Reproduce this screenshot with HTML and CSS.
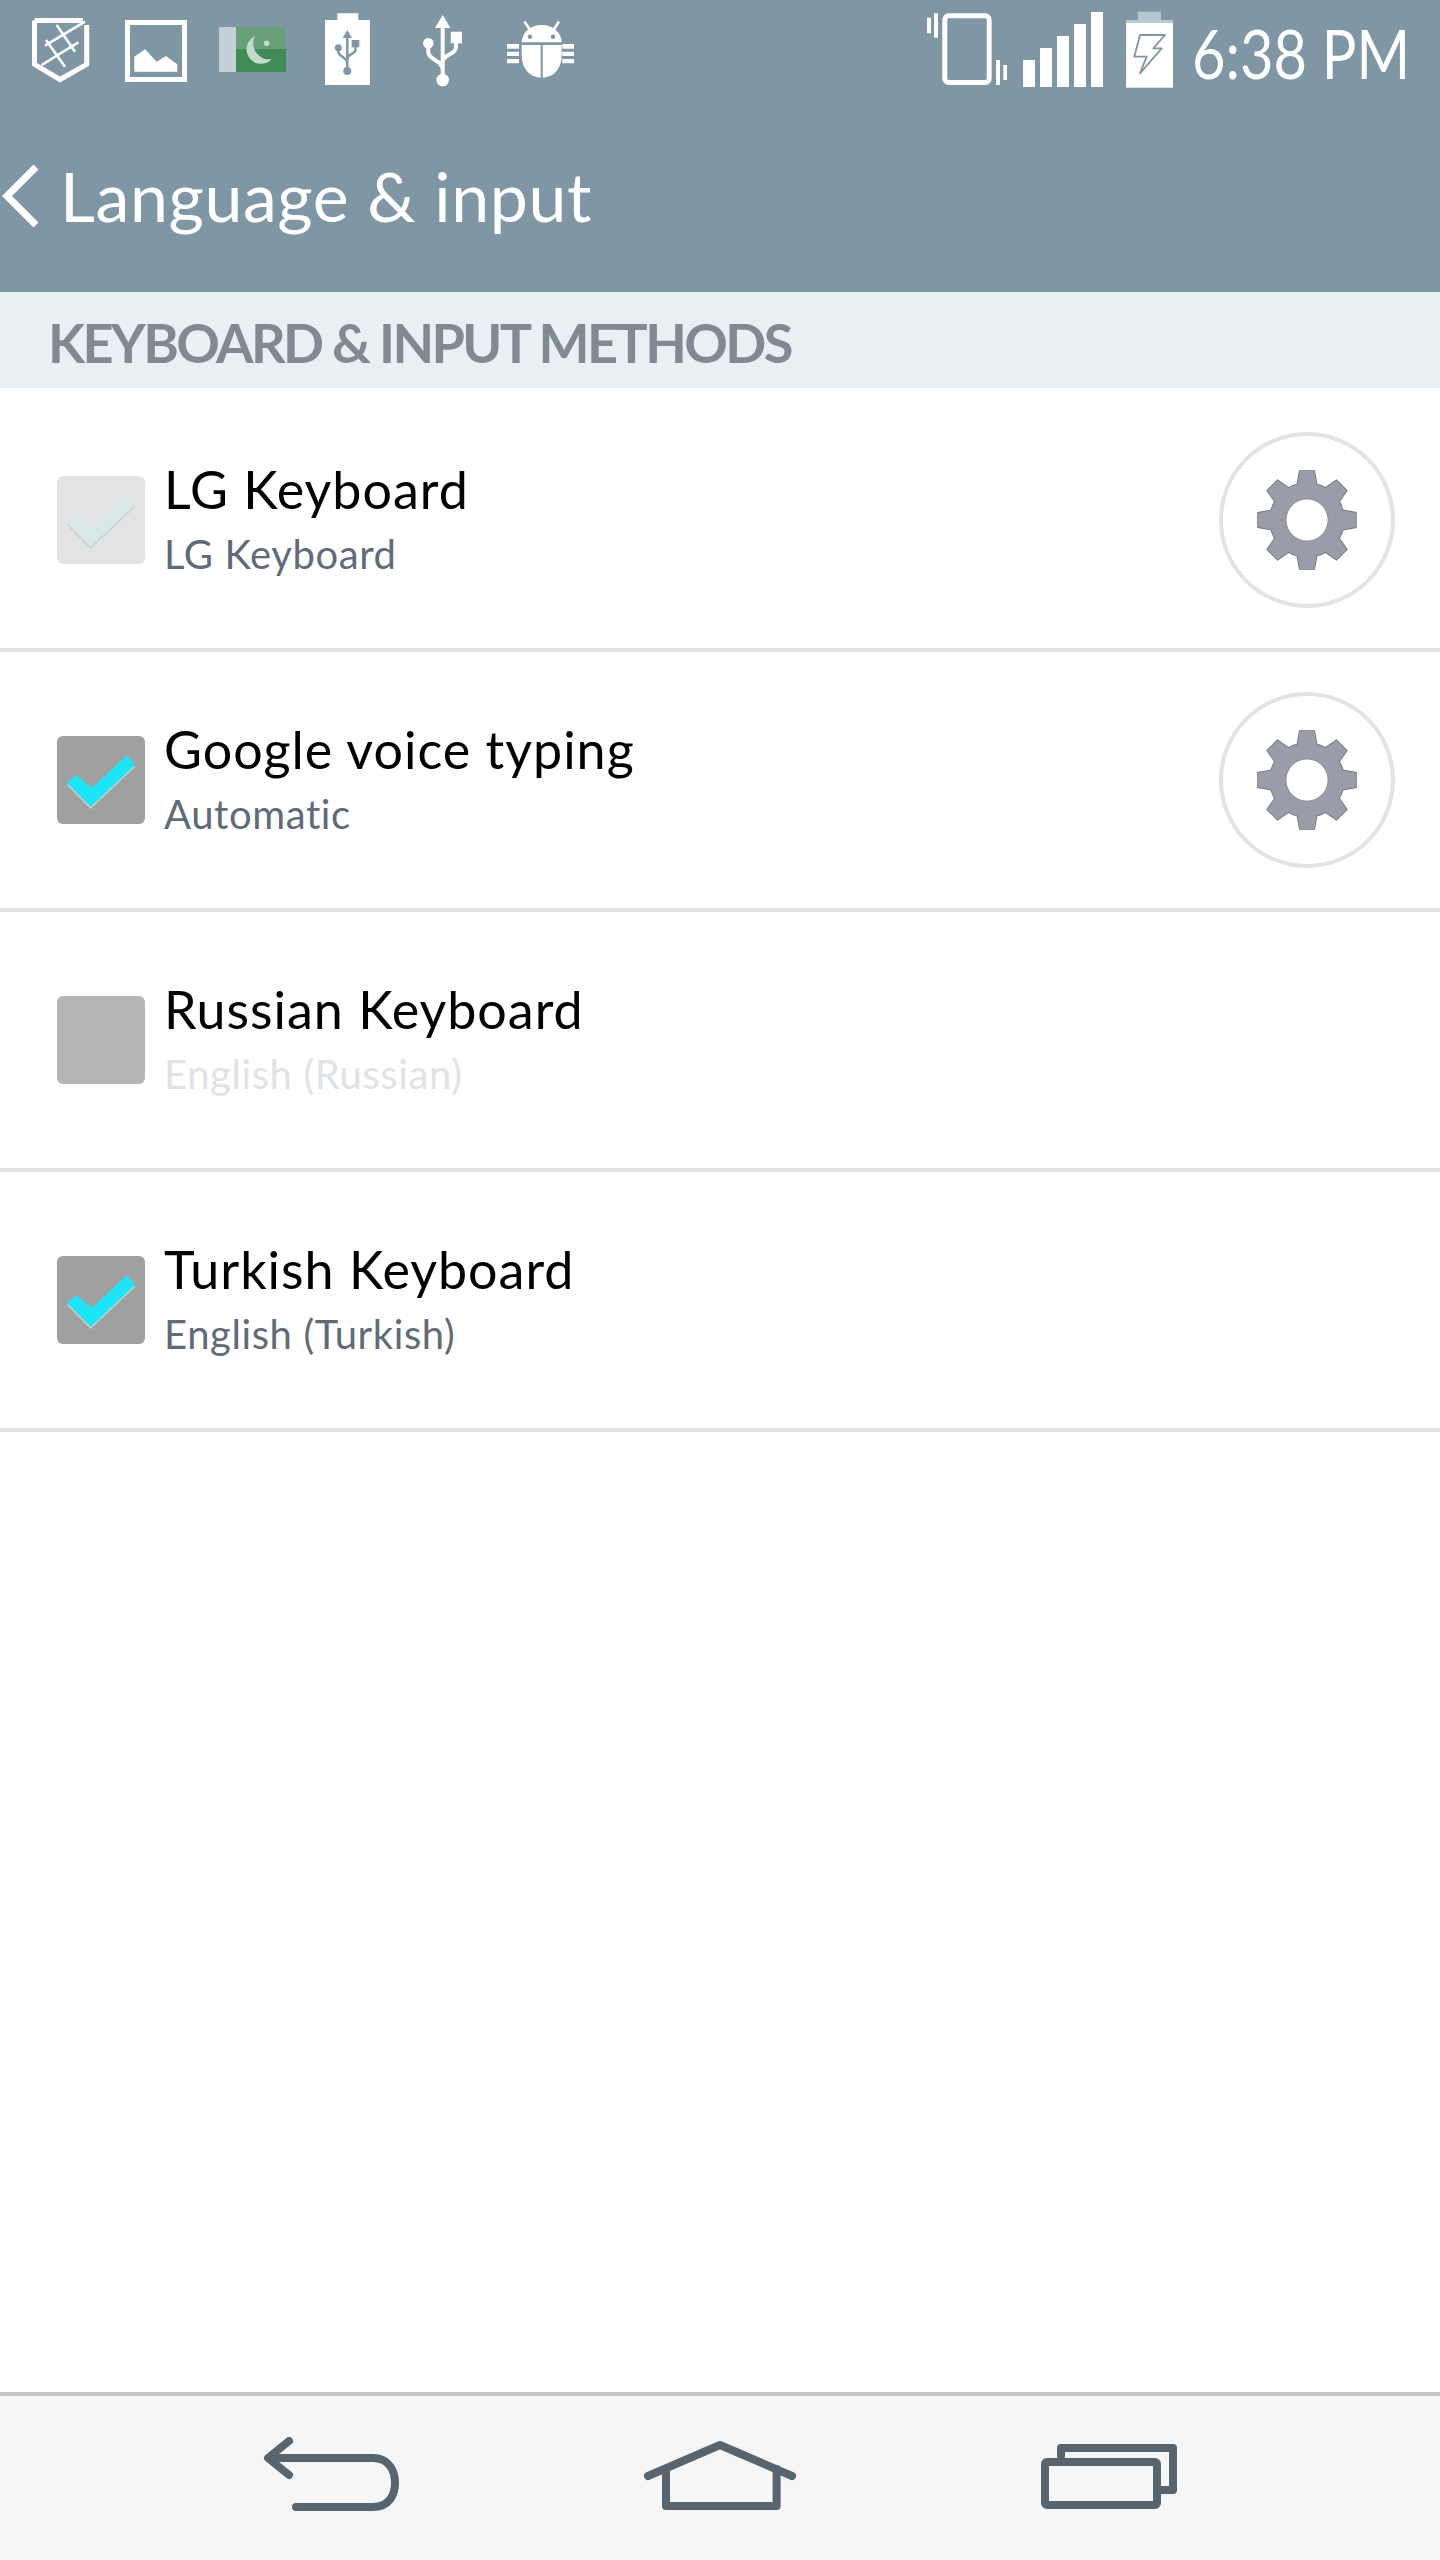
FILE: index.html
```html
<!DOCTYPE html>
<html lang="en">
<head>
<meta charset="utf-8">
<title>Language &amp; input</title>
<link rel="stylesheet" href="styles.css">
</head>
<body>
<svg class="defs" width="0" height="0" aria-hidden="true">
  <defs>
    <g id="teeth">
      <circle cx="60" cy="60" r="37"/>
      <polygon id="tooth" points="52.7,11 67.3,11 70,26 50,26"/>
      <use href="#tooth" transform="rotate(45 60 60)"/>
      <use href="#tooth" transform="rotate(90 60 60)"/>
      <use href="#tooth" transform="rotate(135 60 60)"/>
      <use href="#tooth" transform="rotate(180 60 60)"/>
      <use href="#tooth" transform="rotate(225 60 60)"/>
      <use href="#tooth" transform="rotate(270 60 60)"/>
      <use href="#tooth" transform="rotate(315 60 60)"/>
    </g>
    <g id="gear">
      <use href="#teeth" class="gear-edge"/>
      <use href="#teeth" class="gear-fill"/>
      <circle cx="60" cy="60" r="21" class="gear-hole"/>
    </g>
    <g id="tick">
      <polygon class="tick-shadow" points="10,49 19,41 34.5,54 70,21 78,31 33.6,73"/>
      <polygon points="10,47 19,39 34.5,52 70,19 78,29 33.6,71"/>
    </g>
  </defs>
</svg>

<div class="page">
  <header class="appbar">
    <div class="status">
      <div class="status-left">
        <svg width="61" height="100" viewBox="0 0 61 100" class="ic">
          <path d="M2.5 20.500H51M54.700 25V64.300L28 79.500 2.500 64.300V20.500" class="line-5"/>
          <path d="M9.700 65 46.300 42.300M13 45.700 53 21.700M24.700 25 43 51.700M14 40 33 66.700" class="line-2"/>
        </svg>
        <svg width="62" height="100" viewBox="0 0 62 100" class="ic">
          <rect x="2.5" y="22.5" width="57" height="57" class="line-5"/>
          <polygon points="9.3,71.7 9.3,56.7 20,49.3 31.7,61.7 41,56 52.3,64.3 52.3,71.7" class="solid"/>
        </svg>
        <svg width="74" height="100" viewBox="0 0 74 100" class="ic">
          <rect x="0" y="27" width="17" height="45" class="flag-band"/>
          <rect x="17" y="27" width="50" height="22" class="flag-top"/>
          <rect x="17" y="49" width="50" height="23" class="flag-bottom"/>
          <path d="M36 36A14.600 14.600 0 1 0 53 59 16 16 0 0 1 36 36Z" class="flag-moon"/>
          <circle cx="47.7" cy="43.3" r="2.8" class="flag-moon"/>
        </svg>
        <svg width="66" height="100" viewBox="0 0 66 100" class="ic">
          <path d="M12.300 13.300H33.300V20H45V85H0V20H12.300Z" class="solid"/>
          <path d="M22.300 36V71M13.300 48V52C13.300 56 22.300 58 22.300 63M30.500 47V50C30.500 54 22.300 54 22.300 59" class="usb-thin"/>
          <polygon points="22.3,30 27,38 17.6,38" class="usb-dark"/>
          <circle cx="22.3" cy="71" r="4" class="usb-dark"/>
          <circle cx="13.3" cy="47.7" r="3.5" class="usb-dark"/>
          <rect x="26.7" y="40" width="7.6" height="7.3" class="usb-dark"/>
        </svg>
        <svg width="52" height="100" viewBox="0 0 52 100" class="ic">
          <path d="M19.700 25V78M5.300 45V52C5.300 60 19.700 60 19.700 70M33 42V47C33 55 19.700 54 19.700 62" class="line-4"/>
          <polygon points="19.7,15 27.5,28 12,28" class="solid"/>
          <circle cx="19.7" cy="80" r="6.3" class="solid"/>
          <circle cx="5.3" cy="43.3" r="5.3" class="solid"/>
          <rect x="27.7" y="31.7" width="11.3" height="11.6" class="solid"/>
        </svg>
        <svg width="67" height="100" viewBox="0 0 67 100" class="ic">
          <path d="M14.700 42.300A20 17.300 0 0 1 54.700 42.300Z" class="solid"/>
          <path d="M23 30 17.500 21.500M46.500 30 52 21.500" class="line-2"/>
          <circle cx="23" cy="36.7" r="2.2" class="bg-dot"/>
          <circle cx="46" cy="36.7" r="2.2" class="bg-dot"/>
          <path d="M14.700 45H33.700V77.700C22 77 14.700 68 14.700 55Z" class="solid"/>
          <path d="M54.700 45H35.700V77.700C47.400 77 54.700 68 54.700 55Z" class="solid"/>
          <path d="M0 44H12V48.700H0ZM0 51.700H12V56H0ZM0 59H12V63.300H0ZM55.300 44H67V48.700H55.300ZM55.300 51.700H67V56H55.300ZM55.300 59H67V63.300H55.300Z" class="solid"/>
        </svg>
      </div>
      <div class="status-right">
        <svg width="80" height="100" viewBox="0 0 80 100" class="ic">
          <rect x="17.8" y="15.8" width="44.4" height="66.7" rx="4" class="line-5"/>
          <path d="M0 17.700H4V33.300H0ZM7 13.300H11V37.700H7ZM69 60H73V85H69ZM76.300 65H80.300V80H76.300Z" class="solid"/>
        </svg>
        <svg width="80" height="100" viewBox="0 0 80 100" class="ic">
          <path d="M0 60H12V87H0ZM17 48H29V87H17ZM34 36H46V87H34ZM51 24H63V87H51ZM68 12H80V87H68Z" class="solid"/>
        </svg>
        <svg width="47" height="100" viewBox="0 0 47 100" class="ic">
          <rect x="11.7" y="11.7" width="23.3" height="8.3" class="batt-nub"/>
          <rect x="0" y="20" width="47" height="3" class="batt-band"/>
          <rect x="0" y="23" width="47" height="64.7" class="solid"/>
          <polygon points="14,35 39,35 27.3,48.3 35.7,48.3 14,73.3 20.7,56.7 8.3,56.7" class="bolt"/>
        </svg>
        <span class="clock">6:38 PM</span>
      </div>
    </div>
    <div class="titlebar">
      <svg width="60" height="80" viewBox="0 0 60 80" class="chevron">
        <polyline points="36,11 7,40 36,69"/>
      </svg>
      <h1 class="title">Language &amp; input</h1>
    </div>
  </header>

  <h2 class="section">KEYBOARD &amp; INPUT METHODS</h2>

  <main class="list">
    <div class="row">
      <svg width="88" height="88" viewBox="0 0 88 88" class="box box-faded"><use href="#tick"/></svg>
      <div class="labels">
        <div class="name">LG Keyboard</div>
        <div class="desc">LG Keyboard</div>
      </div>
      <button class="gear-btn" aria-label="Settings"><svg width="120" height="120" viewBox="0 0 120 120"><use href="#gear"/></svg></button>
    </div>
    <div class="row">
      <svg width="88" height="88" viewBox="0 0 88 88" class="box box-on"><use href="#tick"/></svg>
      <div class="labels">
        <div class="name">Google voice typing</div>
        <div class="desc">Automatic</div>
      </div>
      <button class="gear-btn" aria-label="Settings"><svg width="120" height="120" viewBox="0 0 120 120"><use href="#gear"/></svg></button>
    </div>
    <div class="row">
      <div class="box box-off"></div>
      <div class="labels">
        <div class="name">Russian Keyboard</div>
        <div class="desc desc-off">English (Russian)</div>
      </div>
    </div>
    <div class="row">
      <svg width="88" height="88" viewBox="0 0 88 88" class="box box-on"><use href="#tick"/></svg>
      <div class="labels">
        <div class="name">Turkish Keyboard</div>
        <div class="desc">English (Turkish)</div>
      </div>
    </div>
  </main>

  <nav class="nav">
    <svg width="136" height="76" viewBox="0 0 136 76" class="nav-ic">
      <path d="M26 4 5 21 26 38"/>
      <path d="M8 21H110C126 21 132 34 132 46 132 58 126 70 110 70H33"/>
    </svg>
    <svg width="152" height="76" viewBox="0 0 152 76" class="nav-ic">
      <path d="M4 39 76 8 148 39"/>
      <path d="M22 32V69H132.600V32"/>
    </svg>
    <svg width="136" height="76" viewBox="0 0 136 76" class="nav-ic">
      <rect x="4" y="25" width="112" height="43" rx="2"/>
      <path d="M20 19V11H132V53H120"/>
    </svg>
  </nav>
</div>
</body>
</html>
```

FILE: styles.css
```css
* { box-sizing: border-box; }
html, body { margin: 0; padding: 0; background: #fff; }
body { font-family: "Lato", "Noto Sans", sans-serif; }
.defs { display: block; height: 0; }

.page { width: 1440px; height: 2560px; display: flex; flex-direction: column; background: #fff; }

.appbar { height: 292px; background: #7f96a5; color: #fff; flex: none; display: flex; flex-direction: column; }
.status { height: 100px; flex: none; display: flex; justify-content: space-between; }
.status-left { display: flex; gap: 32px; padding-left: 32px; }
.status-right { display: flex; padding-right: 31px; }
.status-right svg:nth-child(1) { margin-right: 16px; }
.status-right svg:nth-child(2) { margin-right: 23px; }
.status-right svg:nth-child(3) { margin-right: 22px; }
.ic { display: block; flex: none; }
.solid { fill: #fff; }
.line-5 { fill: none; stroke: #fff; stroke-width: 5; }
.line-4 { fill: none; stroke: #fff; stroke-width: 4; }
.line-2 { fill: none; stroke: #fff; stroke-width: 2.6; }
.bg-dot { fill: #7f96a5; }
.usb-thin { fill: none; stroke: #7f96a5; stroke-width: 2.5; }
.usb-dark { fill: #7f96a5; }
.bolt { fill: #fff; stroke: #7f96a5; stroke-width: 1.8; stroke-linejoin: round; }
.flag-band { fill: #c4d0d8; }
.flag-top { fill: #68a07a; }
.flag-bottom { fill: #3f8a55; }
.flag-moon { fill: #c7d8cc; }
.batt-nub { fill: #b4c6cf; }
.batt-band { fill: #b8cad3; }
.clock { display: block; width: 214px; height: 100px; font-size: 68px; line-height: 106px; font-weight: 400; white-space: nowrap; transform: translateX(-3px) scaleX(.85); transform-origin: left center; }

.titlebar { flex: 1; display: flex; align-items: center; }
.chevron { display: block; flex: none; }
.chevron polyline { fill: none; stroke: #fff; stroke-width: 7; }
.title { margin: 0; font-size: 68px; line-height: 100px; font-weight: 400; letter-spacing: .6px; white-space: nowrap; }

.section { margin: 0; height: 96px; flex: none; background: #e8f0f3; color: #7f8a92; font-size: 54px; font-weight: 700; line-height: 102px; letter-spacing: -2.6px; padding-left: 48px; white-space: nowrap; }

.list { flex: 1; padding-top: 4px; }
.row { height: 260px; border-bottom: 4px solid #e4e4e4; display: flex; align-items: center; padding-left: 57px; padding-right: 45px; gap: 19px; }
.box { width: 88px; height: 88px; border-radius: 6px; flex: none; display: block; }
.box-on { background: #a0a0a0; fill: #1ee4f7; }
.box-on .tick-shadow { fill: #6f7d80; }
.box-faded { background: #e3e3e3; fill: #d8e8e8; }
.box-off { background: #b5b5b5; }
.tick-shadow { fill: #c8d0d0; }
.labels { flex: 1; min-width: 0; padding-bottom: 5px; }
.name { font-size: 52px; line-height: 66px; color: #000; letter-spacing: 1px; white-space: nowrap; }
.desc { font-size: 40px; line-height: 50px; color: #5f6b78; letter-spacing: .6px; white-space: nowrap; margin-top: 7px; }
.desc-off { color: #e0e3e5; }

.gear-btn { width: 176px; height: 176px; padding: 0; border: 4px solid #e3e3e3; border-radius: 50%; background: #fff; display: flex; align-items: center; justify-content: center; flex: none; }
.gear-btn svg { display: block; flex: none; }
.gear-fill { fill: #9a9ca9; stroke: none; }
.gear-edge { fill: #6f7078; stroke: #6f7078; stroke-width: 1.5; }
.gear-hole { fill: #fff; stroke: #6f7078; stroke-width: 0.6; }

.nav { height: 168px; flex: none; background: #f6f6f6; border-top: 4px solid #c2c4c6; display: grid; grid-template-columns: repeat(3, 389px); justify-content: center; justify-items: center; align-items: start; padding-top: 41px; }
.nav-ic { display: block; fill: none; stroke: #58646e; stroke-width: 8; stroke-linejoin: round; stroke-linecap: round; }
```
